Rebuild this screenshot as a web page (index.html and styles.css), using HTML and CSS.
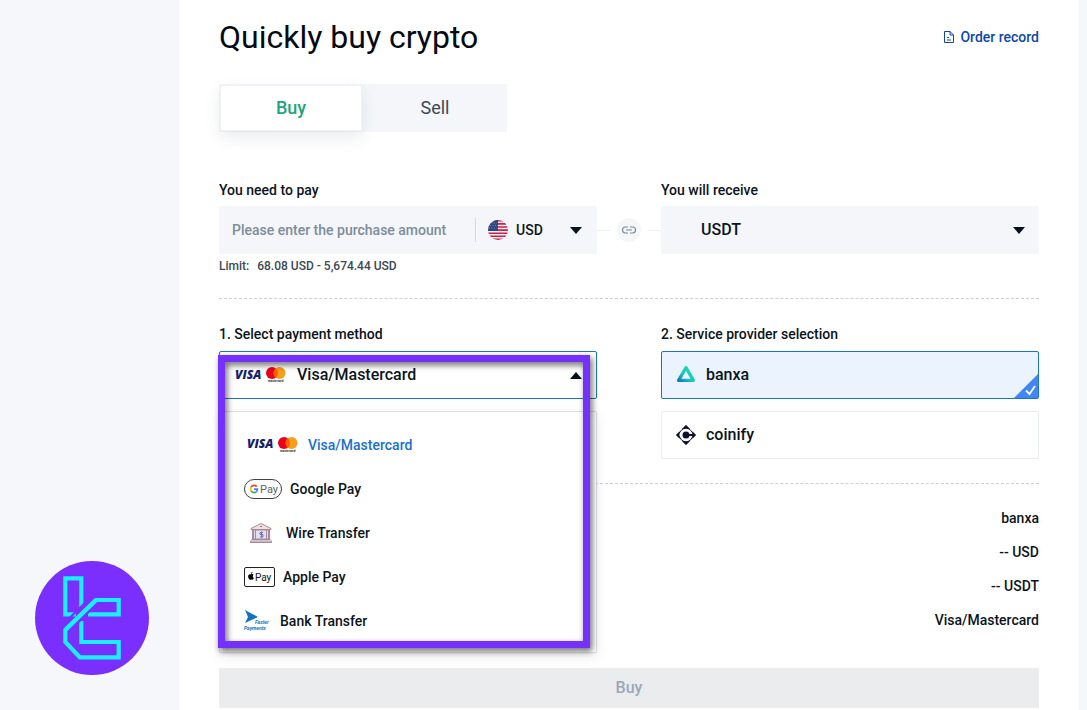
FILE: index.html
```html
<!DOCTYPE html>
<html lang="en">
<head>
<meta charset="utf-8">
<title>Quickly buy crypto</title>
<link rel="stylesheet" href="styles.css">
</head>
<body>
<aside class="rail">
  <svg class="brand" viewBox="0 0 114 114" role="img" aria-label="Brand">
    <circle cx="57" cy="57" r="57" fill="#7b2fff"/>
    <g fill="none" stroke="#19f0ff" stroke-width="4.200">
      <path d="M41 53.300H30.300V17.300H46.300V46"/>
      <path d="M53 53.300H83.700V39H61L30.300 69V81L44.800 96.300H83.700V81H46.300V60"/>
    </g>
    <path fill="#7b2fff" d="M36 57l-2.500-0.500L51 39.500v3.500zM43 63l12-12-2-1-13 13z"/>
    <path fill="none" stroke="#19f0ff" stroke-width="4.200" d="M61 39L30.300 69"/>
  </svg>
</aside>
<main class="panel">
  <header class="head">
    <h1 class="title">Quickly buy crypto</h1>
    <a class="record" href="#orders">
      <svg class="record-icon" viewBox="0 0 12 14" fill="none" stroke="currentColor"><path d="M1.500 1.500h5.500l3.500 3.500v7.500h-9zM7 1.500V5h3.500M4 7.500h2M4 10h4"/></svg>
      Order record
    </a>
  </header>
  <div class="tabs">
    <button class="tab tab-on" type="button">Buy</button>
    <button class="tab" type="button">Sell</button>
  </div>
  <form class="form">
    <div class="row">
      <div class="col">
        <label class="label" for="amount">You need to pay</label>
        <div class="field">
          <input class="amount" id="amount" type="text" placeholder="Please enter the purchase amount">
          <div class="currency">
            <svg class="flag" viewBox="0 0 20 20">
              <clipPath id="round"><circle cx="10" cy="10" r="10"/></clipPath>
              <g clip-path="url(#round)">
                <path fill="#f5eef2" d="M0 0h20v20H0z"/>
                <path stroke="#c2244c" stroke-width="1.600" d="M0 .8h20M0 3.900h20M0 7h20M0 10.100h20M0 13.200h20M0 16.300h20M0 19.400h20"/>
                <path fill="#27477f" d="M0 0h10v11H0z"/>
                <path stroke="#8fa3c8" stroke-width=".8" stroke-dasharray="1 1.500" d="M1 3h8M2 5.500h8M1 8h8"/>
              </g>
            </svg>
            <select class="pick" aria-label="Currency"><option>USD</option></select>
            <svg class="caret" viewBox="0 0 12 7"><path d="M0 0h12L6 7z"/></svg>
          </div>
        </div>
        <p class="limit"><span>Limit:</span><span>68.08 USD - 5,674.44 USD</span></p>
      </div>
      <div class="link">
        <i class="dash"></i>
        <span class="link-dot"><svg class="link-icon" viewBox="0 0 16 10" fill="none" stroke="#7d8c98" stroke-width="1.200"><path d="M7 2H4.500a3 3 0 0 0 0 6H7M9 2h2.500a3 3 0 0 1 0 6H9M5 5h6"/></svg></span>
        <i class="dash"></i>
      </div>
      <div class="col">
        <label class="label" for="coin">You will receive</label>
        <div class="field field-coin">
          <select class="pick" id="coin"><option>USDT</option></select>
          <svg class="caret" viewBox="0 0 12 7"><path d="M0 0h12L6 7z"/></svg>
        </div>
      </div>
    </div>
    <div class="row row-choice">
      <div class="col">
        <span class="label" id="method-label">1. Select payment method</span>
        <div class="method">
          <button class="method-btn" type="button" aria-labelledby="method-label" aria-expanded="true">
            <svg class="ic-card" viewBox="0 0 56 20">
              <text x="3" y="14" class="visa-word">VISA</text>
              <circle cx="40" cy="8" r="6" fill="#eb001b"/>
              <circle cx="47.500" cy="8" r="6" fill="#f79e1b"/>
              <path d="M43.750 3.300a6 6 0 0 1 0 9.400a6 6 0 0 1 0-9.400z" fill="#ff5f00"/>
              <text x="36" y="17" class="mc-word">mastercard</text>
            </svg>
            <span class="method-name">Visa/Mastercard</span>
            <svg class="caret" viewBox="0 0 12 7"><path d="M0 7h12L6 0z"/></svg>
          </button>
          <ul class="menu" role="listbox" aria-labelledby="method-label">
            <li class="item item-on" role="option" aria-selected="true">
              <svg class="ic-card" viewBox="0 0 56 20">
                <text x="3" y="13" class="visa-word">VISA</text>
                <circle cx="40" cy="8" r="6" fill="#eb001b"/>
                <circle cx="47.500" cy="8" r="6" fill="#f79e1b"/>
                <path d="M43.750 3.300a6 6 0 0 1 0 9.400a6 6 0 0 1 0-9.400z" fill="#ff5f00"/>
                <text x="36" y="17" class="mc-word">mastercard</text>
              </svg>Visa/Mastercard</li>
            <li class="item" role="option">
              <svg class="ic-google" viewBox="0 0 38 20">
                <rect x=".5" y=".5" width="37" height="19" rx="9.500" fill="#fff" stroke="#3c4043"/>
                <g fill="none" stroke-width="1.700">
                  <path stroke="#ea4335" d="M12.700 7.600A3.500 3.500 0 0 0 7 8.200"/>
                  <path stroke="#fbbc04" d="M7 8.200a3.500 3.500 0 0 0 0 3.700"/>
                  <path stroke="#34a853" d="M7 11.900a3.500 3.500 0 0 0 5.200.9"/>
                  <path stroke="#4285f4" d="M12.200 12.800a3.500 3.500 0 0 0 1.200-2.600H10"/>
                </g>
                <text x="16" y="14" class="pay-grey">Pay</text>
              </svg>Google Pay</li>
            <li class="item" role="option">
              <svg class="ic-bank" viewBox="0 0 34 22" fill="none" stroke="#a58a9c">
                <path fill="#f3dfd6" d="M7 6.500L17 1.500l10 5v1H7z"/>
                <path fill="#e4e0f2" d="M9.500 8h15v9h-15z"/>
                <path d="M8.500 8v9.500M11.500 8v9.500M22.500 8v9.500M25.500 8v9.500"/>
                <path fill="#f3dfd6" d="M7.500 17.500h19M6.500 20.500h21v-1.500h-21z"/>
                <path stroke="#7570b0" d="M19 10.500h-3v2h3v2.500h-3M17.500 9.500v6M16 4.500h2"/>
              </svg>Wire Transfer</li>
            <li class="item" role="option">
              <svg class="ic-apple" viewBox="0 0 31 20">
                <rect x=".5" y=".5" width="30" height="19" rx="1.500" fill="#fff" stroke="#222"/>
                <path d="M7 7.500c1-.7 2-.6 2.600.2-1.200.9-1 2.600.3 3.200-.5 1.300-1.200 2.200-2.100 1.800-.5-.2-.8-.2-1.300 0C5 13.300 3.500 9.800 4.500 8.100 5.200 7 6.200 7.200 7 7.500zM7 7c0-1 .7-1.800 1.600-1.900C8.700 6.200 8 7 7 7z"/>
                <text x="11" y="13.500" class="pay-black">Pay</text>
              </svg>Apple Pay</li>
            <li class="item" role="option">
              <svg class="ic-faster" viewBox="0 0 28 22">
                <path fill="#1173c4" d="M1 0l13 7L1 13l3-6z"/>
                <text x="11" y="14" class="fp">Faster</text>
                <text x="0" y="20" class="fp">Payments</text>
              </svg>Bank Transfer</li>
          </ul>
          <div class="frame"></div>
        </div>
      </div>
      <fieldset class="col providers">
        <legend class="label">2. Service provider selection</legend>
        <label class="provider provider-on">
          <input class="radio" type="radio" name="provider" checked>
          <svg class="p-icon" viewBox="0 0 20 20" fill="none">
            <defs><linearGradient id="bx" x1="0" y1="1" x2="1" y2="0"><stop offset="0" stop-color="#1577c2"/><stop offset=".4" stop-color="#16c8c0"/><stop offset="1" stop-color="#1edbb0"/></linearGradient></defs>
            <path stroke="url(#bx)" stroke-width="3.200" stroke-linejoin="round" d="M10 2.600L17.400 15.400H2.600z"/>
          </svg>
          banxa
          <svg class="tick" viewBox="0 0 24 24"><path fill="#4285f4" d="M24 0v24H0z"/><path fill="none" stroke="#fff" stroke-width="1.800" d="M12 16.500l3.500 3.500 5.500-8"/></svg>
        </label>
        <label class="provider">
          <input class="radio" type="radio" name="provider">
          <svg class="p-icon" viewBox="0 0 20 20">
            <path fill="#101030" d="M10 0l4 4H6zM10 20l4-4H6zM0 10l3.500-3.500v7zM20 10l-3.500-3.500v7z"/>
            <path fill="none" stroke="#101030" stroke-width="1.300" d="M10 1.200L18.800 10 10 18.800 1.200 10z"/>
            <circle cx="10" cy="10" r="6.200" fill="#fff"/>
            <circle cx="10" cy="10" r="3.500" fill="#101030"/><path fill="#101030" d="M10 9h9v2h-9z"/>
          </svg>
          coinify
        </label>
      </fieldset>
    </div>
    <ul class="summary">
      <li>banxa</li>
      <li>-- USD</li>
      <li>-- USDT</li>
      <li>Visa/Mastercard</li>
    </ul>
    <button class="submit" type="submit" disabled>Buy</button>
  </form>
</main>
</body>
</html>
```
FILE: styles.css
```css
* { box-sizing: border-box; }
body {
  margin: 0;
  display: flex;
  min-height: 100vh;
  padding-right: 8px;
  background: #f5f7fb;
  color: #0b1420;
  font: 500 14px/20px Roboto, "Liberation Sans", sans-serif;
}
button, input, select { font: inherit; color: inherit; border: 0; margin: 0; padding: 0; background: none; }
ul { list-style: none; margin: 0; padding: 0; }
svg { flex: none; }

.rail { flex: none; width: 179px; padding: 35px; display: flex; align-items: flex-end; }
.brand { width: 114px; height: 114px; }

.panel { flex: 1; min-width: 0; background: #fff; padding: 13px 40px 2px; }
.head { display: flex; justify-content: space-between; align-items: center; }
.title { margin: 0; font-size: 32px; line-height: 48px; font-weight: 400; color: #040a12; }
.record { display: flex; align-items: center; gap: 5px; color: #0d47a8; text-decoration: none; }
.record-icon { width: 12px; height: 14px; }

.tabs { display: flex; gap: 2px; width: 288px; height: 48px; margin-top: 23px; padding: 1px; background: #f4f6fa; }
.tab { flex: 1 1 50%; font-size: 18px; font-weight: 400; color: #3b4856; border-radius: 2px; }
.tab-on { font-weight: 500; color: #1fa37c; background: #fff; border: 1px solid #eff1f4; box-shadow: 0 6px 16px rgba(40, 60, 90, .1); }

.row { display: flex; margin-top: 48px; height: 119px; border-bottom: 1px dashed #ccd0d4; }
.row-choice { margin-top: 25px; gap: 64px; height: 160px; }
.col { flex: 1; min-width: 0; display: flex; flex-direction: column; }
.label { display: block; padding: 0; margin-bottom: 6px; }
.field { display: flex; align-items: center; height: 48px; padding: 0 15px 0 13px; background: #f5f6fa; border-radius: 2px; }
.amount { flex: 1; min-width: 0; outline: 0; }
.amount::placeholder { color: #7c8d9b; opacity: 1; }
.currency { display: flex; align-items: center; width: 107px; height: 24px; padding-left: 12px; border-left: 1px solid #d5dae0; }
.flag { width: 20px; height: 20px; margin-right: 8px; }
.pick { flex: 1; min-width: 0; appearance: none; outline: 0; }
.caret { width: 12px; height: 7px; fill: #08121e; }
.field-coin { padding: 0 14px 0 40px; font-size: 16px; }
.limit { display: flex; gap: 8px; margin: 2px 0 0; font-size: 12px; color: #3b4856; }
.link { display: flex; align-items: center; justify-content: space-between; width: 64px; height: 48px; margin-top: 26px; }
.dash { width: 13px; height: 1px; background: #eceff3; }
.link-dot { display: flex; align-items: center; justify-content: center; width: 24px; height: 24px; border-radius: 50%; background: #f4f6f8; }
.link-icon { width: 16px; height: 10px; }

.method { position: relative; }
.row-choice .label { margin-bottom: 7px; }
.method-btn { display: flex; align-items: center; width: 100%; height: 48px; padding: 0 14px 0 12px; border: 1px solid #1b75bc; border-radius: 2px; font-size: 16px; text-align: left; }
.ic-card { width: 56px; height: 20px; }
.method-name { flex: 1; margin-left: 9px; }
.menu { position: absolute; top: 60px; left: 0; right: 0; padding: 11px 24px 9px; background: #fff; border: 1px solid #dcdfe2; border-radius: 2px; box-shadow: 0 4px 12px rgba(0, 0, 0, .08); }
.item { display: flex; align-items: center; gap: 8px; height: 44px; }
.item-on { color: #1b6fd0; }
.ic-google { width: 38px; height: 20px; }
.ic-bank { width: 34px; height: 22px; }
.ic-apple { width: 31px; height: 20px; }
.ic-faster { width: 28px; height: 22px; overflow: visible; }
.visa-word { font: italic 800 12px "Open Sans", sans-serif; fill: #14206e; }
.mc-word { font: 700 3px Roboto, sans-serif; fill: #333; }
.pay-grey { font: 400 11px Roboto, sans-serif; fill: #5f6368; }
.pay-black { font: 400 10px Roboto, sans-serif; fill: #111; }
.fp { font: italic 700 5px Roboto, sans-serif; fill: #1173c4; }
.frame { position: absolute; top: 4px; right: 7px; left: -1px; height: 293px; border: 7px solid #7530fb; filter: drop-shadow(2px 3px 3px rgba(0, 0, 0, .6)); pointer-events: none; }

.providers { margin: 0; padding: 0; border: 0; }
.provider { position: relative; display: flex; align-items: center; gap: 10px; height: 48px; margin-bottom: 12px; padding: 0 14px; border: 1px solid #eaecee; border-radius: 2px; font-size: 16px; }
.provider-on { background: #ebf3fe; border-color: #1b75bc; }
.radio { position: absolute; opacity: 0; }
.p-icon { width: 20px; height: 20px; }
.tick { position: absolute; right: 0; bottom: 0; width: 24px; height: 24px; }

.summary { padding-top: 24px; text-align: right; }
.summary li { line-height: 20px; margin-bottom: 14px; }
.submit { width: 100%; height: 40px; margin-top: 24px; font-size: 16px; color: #9aa9b8; background: #ebecee; border-radius: 1px; }
```
